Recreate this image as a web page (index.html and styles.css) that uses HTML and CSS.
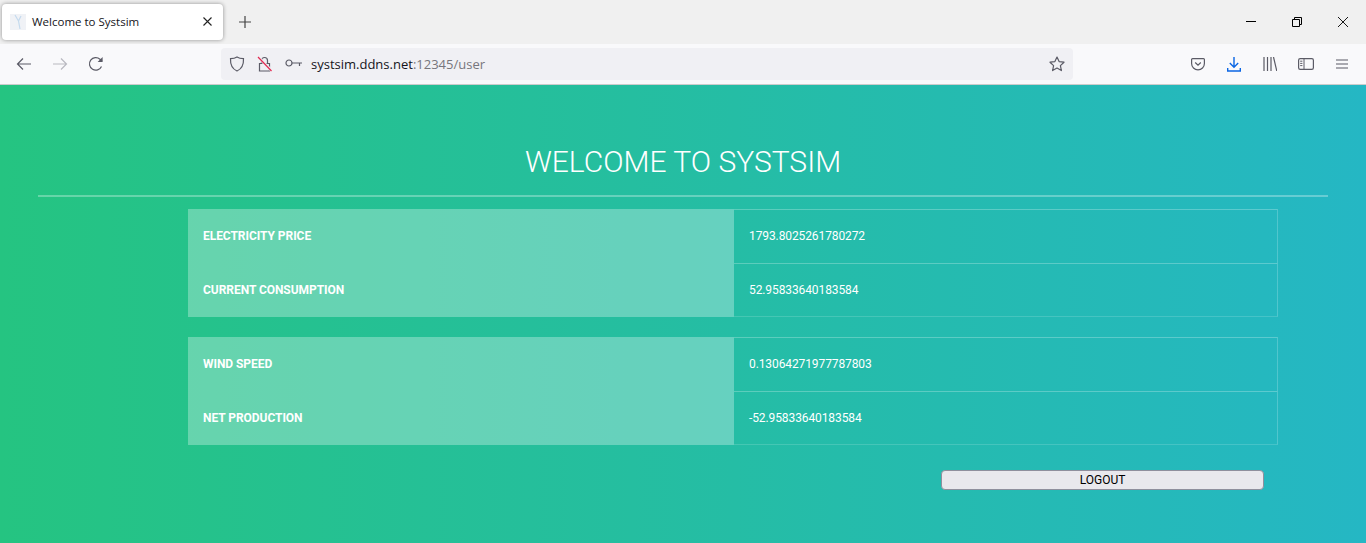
FILE: index.html
```html
<!DOCTYPE html>
<html lang="en">
<head>
  <meta charset="UTF-8">
  <title>Welcome to Systsim</title>
  <link rel="stylesheet" href="styles.css">
</head>
<body>

<div class="tabbar">
  <div class="tab">
    <svg class="favicon" width="16" height="16" viewBox="0 0 16 16">
      <rect width="16" height="16" fill="#f0f2f6"/>
      <path d="M8.5 7 L5 1 M8.5 7 L11 2 M8.5 7 L10 15" stroke="#c4daee" stroke-width="1.2" fill="none"/>
    </svg>
    <span class="tab-title">Welcome to Systsim</span>
    <svg class="tab-close" width="9" height="9" viewBox="0 0 9 9">
      <path d="M.5 .5 L8.5 8.5 M8.5 .5 L.5 8.5" stroke="#222" stroke-width="1.1" fill="none"/>
    </svg>
  </div>
  <svg class="new-tab" width="14" height="14" viewBox="0 0 14 14">
    <path d="M7 1 V13 M1 7 H13" stroke="#444" stroke-width="1.2" fill="none"/>
  </svg>
  <div class="window-btns">
    <svg width="10" height="10" viewBox="0 0 10 10"><path d="M0 4.5 H10" stroke="#000" fill="none"/></svg>
    <svg width="10" height="10" viewBox="0 0 10 10"><path d="M.5 2.5 H7.5 V9.5 H.5 Z M2.5 2.5 V.5 H9.5 V7.5 H7.5" stroke="#000" fill="none"/></svg>
    <svg width="10" height="10" viewBox="0 0 10 10"><path d="M0 0 L10 10 M10 0 L0 10" stroke="#000" stroke-width=".9" fill="none"/></svg>
  </div>
</div>

<div class="toolbar">
  <div class="nav-btns">
    <svg width="16" height="14" viewBox="0 0 16 14"><path d="M15 7 H1.5 M7 1.5 L1.5 7 L7 12.5" stroke="#5b5b66" stroke-width="1.2" fill="none"/></svg>
    <svg width="16" height="14" viewBox="0 0 16 14"><path d="M1 7 H14.5 M9 1.5 L14.5 7 L9 12.5" stroke="#b9b9c0" stroke-width="1.2" fill="none"/></svg>
    <svg width="16" height="16" viewBox="0 0 16 16"><path d="M13.5 10.5 A6.3 6.3 0 1 1 12 3.2 L14 5" stroke="#5b5b66" stroke-width="1.2" fill="none"/><path d="M14.6 1 V6 H9.6 Z" fill="#5b5b66"/></svg>
  </div>
  <div class="urlbar">
    <svg width="16" height="16" viewBox="0 0 16 16"><path d="M8 1 C10 2.3 12 2.6 14.5 2.6 C14.8 9 12.5 13 8 15 C3.5 13 1.2 9 1.5 2.6 C4 2.6 6 2.3 8 1 Z" stroke="#5b5b66" stroke-width="1.2" fill="none"/></svg>
    <svg width="16" height="16" viewBox="0 0 16 16"><path d="M4.5 7.5 V4.5 A3 3 0 0 1 10.5 4.5 V7.5 M2.5 7.5 H12.5 V15 H2.5 Z" stroke="#5b5b66" stroke-width="1.2" fill="none"/><path d="M1 1 L15 15" stroke="#f0f0f4" stroke-width="3"/><path d="M1 1 L14.5 15" stroke="#e22850" stroke-width="1.2"/></svg>
    <svg width="18" height="10" viewBox="0 0 18 10"><circle cx="4" cy="4" r="3" stroke="#5b5b66" stroke-width="1.2" fill="none"/><path d="M7 4 H17 M14.5 4 V7" stroke="#5b5b66" stroke-width="1.2" fill="none"/></svg>
    <span class="url"><span class="url-host">systsim.ddns.net</span>:12345/user</span>
    <svg class="star" width="16" height="16" viewBox="0 0 16 16"><path d="M8 1 L10.1 5.6 L15 6.2 L11.4 9.6 L12.4 14.6 L8 12.1 L3.6 14.6 L4.6 9.6 L1 6.2 L5.9 5.6 Z" stroke="#5b5b66" stroke-width="1.2" stroke-linejoin="round" fill="none"/></svg>
  </div>
  <div class="tool-btns">
    <svg width="14" height="13" viewBox="0 0 14 13"><path d="M1.5 .7 H12.5 A.9 .9 0 0 1 13.4 1.6 V5.5 A6.4 6.4 0 0 1 .6 5.5 V1.6 A.9 .9 0 0 1 1.5 .7 Z M4.2 4.5 L7 7.2 L9.8 4.5" stroke="#5b5b66" stroke-width="1.2" fill="none"/></svg>
    <svg width="14" height="15" viewBox="0 0 14 15"><path d="M7 0 V10 M2.8 6 L7 10.2 L11.2 6 M.7 11 V14 H13.3 V11" stroke="#0b66e4" stroke-width="1.4" fill="none"/></svg>
    <svg width="14" height="14" viewBox="0 0 14 14"><path d="M1 0 V14 M4.5 0 V14 M8 0 V14 M10.5 0 L13.8 14" stroke="#5b5b66" stroke-width="1.2" fill="none"/></svg>
    <svg width="16" height="12" viewBox="0 0 16 12"><rect x=".6" y=".6" width="14.8" height="10.8" rx="1.6" stroke="#5b5b66" stroke-width="1.2" fill="none"/><path d="M6 .6 V11.4 M2.2 3.2 H4.4 M2.2 5.4 H4.4 M2.2 7.6 H4.4" stroke="#5b5b66" stroke-width="1" fill="none"/></svg>
    <svg width="12" height="10" viewBox="0 0 12 10"><path d="M0 1 H12 M0 5 H12 M0 9 H12" stroke="#5b5b66" stroke-width="1.2" fill="none"/></svg>
  </div>
</div>

<div class="page">
  <h1>WELCOME TO SYSTSIM</h1>
  <hr class="divider">

  <table class="stats">
    <tr><th>Electricity Price</th><td>1793.8025261780272</td></tr>
    <tr><th>Current Consumption</th><td>52.95833640183584</td></tr>
  </table>

  <table class="stats">
    <tr><th>Wind Speed</th><td>0.13064271977787803</td></tr>
    <tr><th>Net Production</th><td>-52.95833640183584</td></tr>
  </table>

  <div class="actions">
    <button type="button">LOGOUT</button>
  </div>
</div>

</body>
</html>
```

FILE: styles.css
```css
* {
  box-sizing: border-box;
}
html, body {
  margin: 0;
  height: 543px;
  overflow: hidden;
}
body {
  font-family: Roboto, sans-serif;
  display: flex;
  flex-direction: column;
}

/* browser chrome */
.tabbar {
  height: 44px;
  background-color: #f0f0f0;
  display: flex;
  align-items: center;
  padding: 0 0 0 2px;
}
.tab {
  width: 221px;
  height: 36px;
  margin-top: -1px;
  background-color: #fff;
  border-radius: 4px;
  box-shadow: 0 0 4px rgba(0, 0, 0, 0.4);
  display: flex;
  align-items: center;
  padding: 0 11px 0 8px;
}
.favicon {
  flex: none;
}
.tab-title {
  flex: 1;
  margin-left: 6px;
  font-family: "Open Sans", sans-serif;
  font-size: 11.5px;
  color: #15141a;
}
.new-tab {
  margin-left: 15px;
}
.window-btns {
  margin-left: auto;
  display: flex;
  gap: 36px;
  padding-right: 18px;
}
.toolbar {
  height: 41px;
  background-color: #f9f9fb;
  border-bottom: 1px solid #ccc;
  display: flex;
  align-items: center;
}
.nav-btns {
  width: 221px;
  display: flex;
  align-items: center;
  gap: 20px;
  padding-left: 16px;
}
.urlbar {
  width: 852px;
  height: 32px;
  background-color: #f0f0f4;
  border-radius: 4px;
  display: flex;
  align-items: center;
  gap: 12px;
  padding: 0 8px;
}
.url {
  flex: 1;
  margin-left: -4px;
  font-family: "Open Sans", sans-serif;
  font-size: 13px;
  color: #77767c;
}
.url-host {
  color: #15141a;
}
.tool-btns {
  flex: 1;
  display: flex;
  align-items: center;
  justify-content: space-between;
  padding: 0 18px 0 118px;
}

/* page */
.page {
  flex: 1;
  background: linear-gradient(to right, #25c481, #25b7c4);
  padding: 0 38px;
}
h1 {
  margin: 59px 0 0;
  font-size: 30px;
  font-weight: 300;
  line-height: 36px;
  color: #fff;
  text-align: center;
}
.divider {
  margin: 15px 0 12px;
  height: 2px;
  border: 0;
  background-color: rgba(255, 255, 255, 0.3);
}
.stats {
  width: 1090px;
  margin: 0 0 20px 150px;
  border-collapse: separate;
  border-spacing: 0;
  table-layout: fixed;
  font-size: 12px;
  color: #fff;
}
.stats th {
  width: 546px;
  height: 54px;
  padding: 15px;
  background-color: rgba(255, 255, 255, 0.3);
  font-weight: 700;
  letter-spacing: -0.05px;
  text-align: left;
  text-transform: uppercase;
}
.stats td {
  height: 54px;
  padding: 15px;
  border-top: 1px solid rgba(255, 255, 255, 0.25);
  border-right: 1px solid rgba(255, 255, 255, 0.2);
  letter-spacing: -0.1px;
}
.stats tr:first-child td {
  padding: 14px 15px 16px;
}
.stats tr:last-child td {
  border-bottom: 1px solid rgba(255, 255, 255, 0.15);
}
.actions {
  margin: 25px 64px 0 0;
  display: flex;
  justify-content: flex-end;
}
.actions button {
  width: 323px;
  height: 20px;
  padding: 0;
  background-color: #e9e8ed;
  border: 1px solid #8f8f9d;
  border-radius: 4px;
  font-family: Roboto, sans-serif;
  font-size: 12px;
  color: #000;
}
```
